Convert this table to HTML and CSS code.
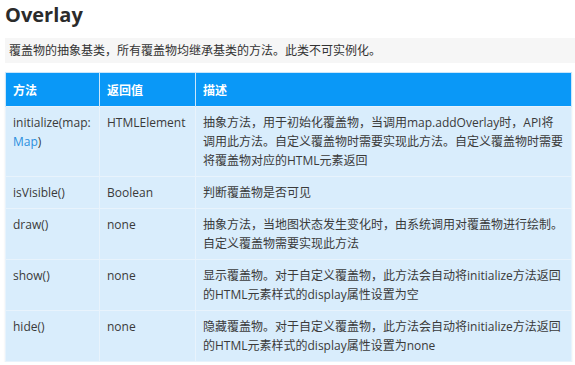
FILE: index.html
```html
<!DOCTYPE html>
<html lang="zh">
<head>
<meta charset="utf-8">
<title>Overlay</title>
<link rel="stylesheet" href="styles.css">
</head>
<body>
<div class="page">
  <h2 class="title">Overlay</h2>
  <div class="desc">覆盖物的抽象基类，所有覆盖物均继承基类的方法。此类不可实例化。</div>
  <table class="api">
    <colgroup>
      <col class="c1"><col class="c2"><col class="c3">
    </colgroup>
    <thead>
      <tr><th>方法</th><th>返回值</th><th>描述</th></tr>
    </thead>
    <tbody>
      <tr>
        <td>initialize(map: <a class="link">Map</a>)</td>
        <td>HTMLElement</td>
        <td>抽象方法，用于初始化覆盖物，当调用map.addOverlay时，API将调用此方法。自定义覆盖物时需要实现此方法。自定义覆盖物时需要将覆盖物对应的HTML元素返回</td>
      </tr>
      <tr>
        <td>isVisible()</td>
        <td>Boolean</td>
        <td>判断覆盖物是否可见</td>
      </tr>
      <tr>
        <td>draw()</td>
        <td>none</td>
        <td>抽象方法，当地图状态发生变化时，由系统调用对覆盖物进行绘制。自定义覆盖物需要实现此方法</td>
      </tr>
      <tr>
        <td>show()</td>
        <td>none</td>
        <td>显示覆盖物。对于自定义覆盖物，此方法会自动将initialize方法返回的HTML元素样式的display属性设置为空</td>
      </tr>
      <tr>
        <td>hide()</td>
        <td>none</td>
        <td>隐藏覆盖物。对于自定义覆盖物，此方法会自动将initialize方法返回的HTML元素样式的display属性设置为none</td>
      </tr>
    </tbody>
  </table>
</div>
</body>
</html>
```

FILE: styles.css
```css
html, body {
  margin: 0;
  padding: 0;
  background: #ffffff;
}
body {
  font-family: "Open Sans", "Noto Sans CJK SC", sans-serif;
  font-size: 12px;
  color: #333333;
}
.page {
  padding: 0 0 0 5px;
}
.title {
  margin: 0;
  font-size: 20px;
  font-weight: 700;
  line-height: 30px;
  color: #2b2b2b;
}
.desc {
  margin-top: 8px;
  height: 25px;
  line-height: 25px;
  padding-left: 4px;
  background: #f6f6f6;
  color: #333333;
}
.api {
  margin-top: 9px;
  width: 567px;
  border-collapse: collapse;
  table-layout: fixed;
  box-shadow: 0 1px 2px rgba(0,0,0,0.08);
}
.c1 { width: 94px; }
.c2 { width: 96px; }
.api th {
  height: 33px;
  padding: 0 7px;
  background: #0a98f7;
  color: #ffffff;
  font-weight: 700;
  text-align: left;
  border: 1px solid #c9e6fb;
  border-bottom: none;
}
.api td {
  padding: 6px 7px 6px 7px;
  line-height: 19px;
  vertical-align: top;
  background: #d9edfc;
  border: 1px solid #e8f3fc;
  color: #3a3a3a;
  word-wrap: break-word;
}
.link {
  color: #2b8fde;
  text-decoration: none;
}
```
